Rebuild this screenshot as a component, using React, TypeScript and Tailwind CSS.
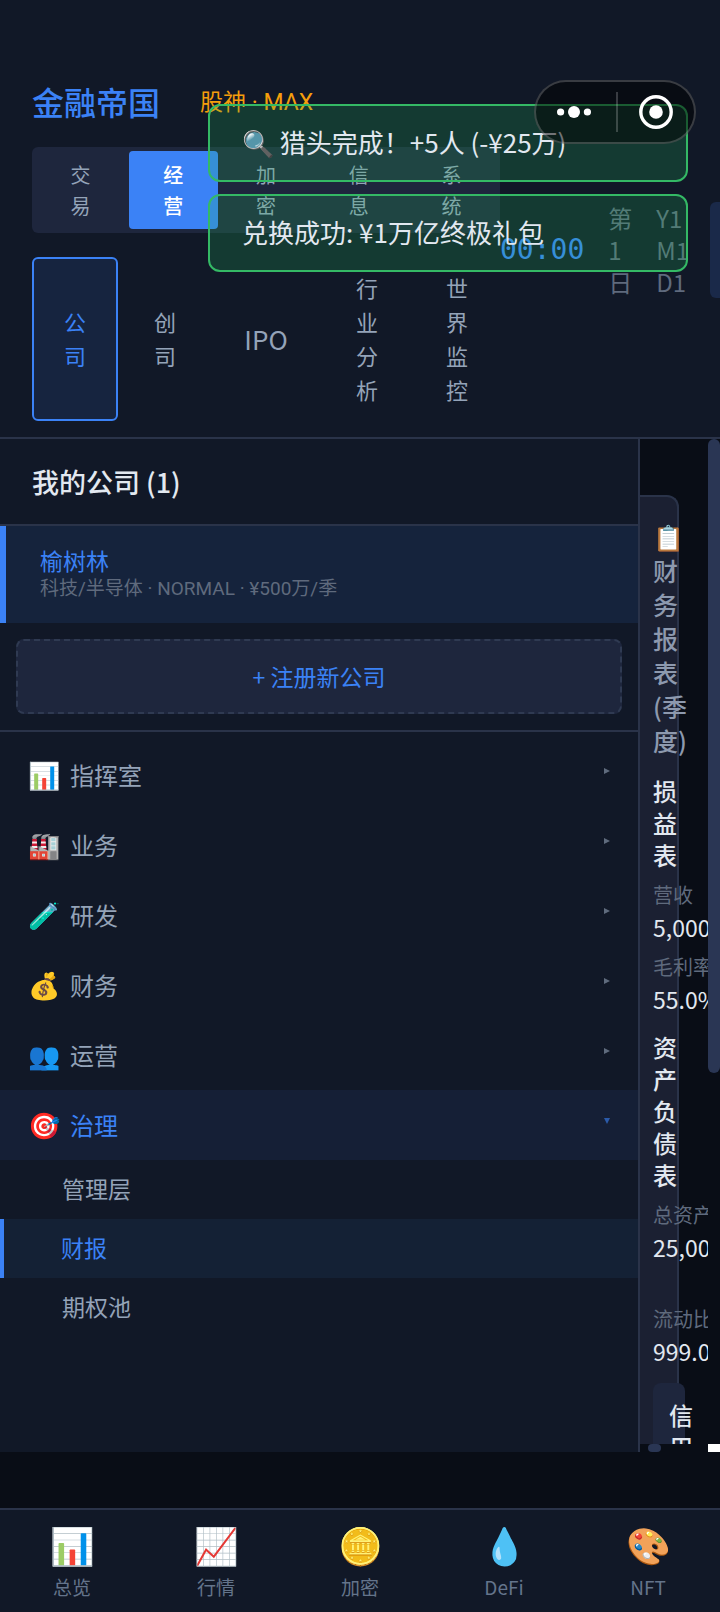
const modes = ["交易", "经营", "加密", "信息", "系统"];

const tabs = ["公司", "创司", "IPO", "行业分析", "世界监控"];

const toasts = ["🔍 猎头完成！+5人 (-¥25万)", "兑换成功: ¥1万亿终极礼包"];

const menu = [
  { icon: "📊", label: "指挥室" },
  { icon: "🏭", label: "业务" },
  { icon: "🧪", label: "研发" },
  { icon: "💰", label: "财务" },
  { icon: "👥", label: "运营" },
  { icon: "🎯", label: "治理", open: true, children: ["管理层", "财报", "期权池"] }
];

const nav = [
  { icon: "📊", label: "总览" },
  { icon: "📈", label: "行情" },
  { icon: "🪙", label: "加密" },
  { icon: "💧", label: "DeFi" },
  { icon: "🎨", label: "NFT" }
];

function Stat({ label, value }: { label: string; value: string }) {
  return (
    <div className="whitespace-nowrap">
      <dt className="text-[20px] leading-8 text-[#5f6a7d]">{label}</dt>
      <dd className="text-[23px] leading-8 text-[#e2e8f0]">{value}</dd>
    </div>
  );
}

function Header() {
  return (
    <header className="flex shrink-0 items-center overflow-hidden border-b-2 border-[#2a3349] bg-[#111827] pt-[78px] pb-4 pl-8">
      <div className="w-[468px] shrink-0">
        <div className="flex h-[47px] items-center gap-10">
          <h1 className="text-[32px] font-medium leading-[47px] text-[#3b82f6]">金融帝国</h1>
          <span className="pt-1 font-[Roboto,'Noto_Sans_CJK_SC',sans-serif] text-[23px] text-[#f59e0b]">
            股神 · MAX
          </span>
        </div>
        <div className="mt-[22px] flex gap-1 rounded-md bg-[#1e263d] p-1">
          {modes.map((mode) => (
            <button
              key={mode}
              type="button"
              className={
                mode === "经营"
                  ? "flex-1 rounded bg-[#3b82f6] px-[34px] py-2 text-[20px] font-medium leading-[31px] text-white"
                  : "flex-1 rounded px-[34px] py-2 text-[20px] leading-[31px] text-[#94a3b8]"
              }
            >
              {mode}
            </button>
          ))}
        </div>
        <nav className="mt-6 flex gap-1">
          {tabs.map((tab) => (
            <button
              key={tab}
              type="button"
              className={
                tab === "公司"
                  ? "w-[86px] rounded-md border-2 border-[#3b82f6] bg-[#16243f] px-[30px] pt-[11px] pb-[13px] text-[22px] leading-[34px] text-[#3b82f6]"
                  : tab === "IPO"
                    ? "w-[108px] py-3 text-[26px] leading-[34px] text-[#94a3b8]"
                    : "w-[86px] border-2 border-transparent px-[30px] pt-[11px] pb-[13px] text-[22px] leading-[34px] text-[#94a3b8]"
              }
            >
              {tab}
            </button>
          ))}
        </nav>
      </div>
      <div className="flex shrink-0 items-center gap-6 text-[24px] leading-8 text-[#5f6a7d]">
        <time className="font-['DejaVu_Sans_Mono',monospace] text-[28px] text-[#3b82f6]">00:00</time>
        <span className="w-6">第1日</span>
        <span className="w-[30px]">Y1 M1 D1</span>
        <button type="button" aria-label="加速" className="h-24 w-20 rounded-md bg-[#1a2949]" />
      </div>
    </header>
  );
}

function Sidebar() {
  return (
    <aside className="min-w-0 flex-1 overflow-hidden border-r-2 border-[#2a3349] bg-[#111827]">
      <h2 className="border-b-2 border-[#2a3349] px-8 py-[22px] text-[27px] font-medium leading-[41px] text-[#e2e8f0]">
        我的公司 (1)
      </h2>
      <button
        type="button"
        className="block h-[97px] w-full border-l-[6px] border-[#3b82f6] bg-[#15233c] pl-[34px] text-left"
      >
        <span className="block text-[23px] leading-[28px] text-[#3b82f6]">榆树林</span>
        <span className="block font-[Roboto,'Noto_Sans_CJK_SC',sans-serif] text-[19px] leading-[30px] text-[#5f6a7d]">
          科技/半导体 · NORMAL · ¥500万/季
        </span>
      </button>
      <div className="border-b-2 border-[#2a3349] p-4">
        <button
          type="button"
          className="h-[75px] w-full rounded-lg border-2 border-dashed border-[#2f3a52] bg-[#1e263d] text-[23px] text-[#3b82f6]"
        >
          + 注册新公司
        </button>
      </div>
      <ul className="pt-2">
        {menu.map((item) => (
          <li key={item.label}>
            <button
              type="button"
              className={
                item.open
                  ? "flex h-[70px] w-full items-center bg-[#151f36] pr-7 pl-7 text-[24px] text-[#3b82f6]"
                  : "flex h-[70px] w-full items-center pr-7 pl-7 text-[24px] text-[#94a3b8]"
              }
            >
              <span className="w-[42px] pb-1 text-left text-[26px]">{item.icon}</span>
              <span className="flex-1 text-left">{item.label}</span>
              <svg className={item.open ? "mb-2 size-[6px] rotate-90" : "mb-2 size-[6px]"} viewBox="0 0 6 6" aria-hidden>
                <path d="M0 0 L6 3 L0 6Z" fill="currentColor" opacity="0.6" />
              </svg>
            </button>
            {item.children?.map((child) => (
              <button
                key={child}
                type="button"
                className={
                  child === "财报"
                    ? "block h-[59px] w-full border-l-4 border-[#3b82f6] bg-[#142135] pb-[2px] pl-[57px] text-left text-[23px] text-[#3b82f6]"
                    : "block h-[59px] w-full pb-[2px] pl-[62px] text-left text-[23px] text-[#94a3b8]"
                }
              >
                {child}
              </button>
            ))}
          </li>
        ))}
      </ul>
    </aside>
  );
}

function Report() {
  return (
    <section className="grid w-20 shrink-0 grid-cols-[1fr_12px] grid-rows-[1fr_8px] overflow-hidden">
      <div className="min-h-0 overflow-hidden pt-14">
        <div className="h-full w-[39px] rounded-tr-xl border-t-2 border-r-2 border-[#2a3349] bg-[#1b2032] pt-[22px] pl-[13px]">
          <h3 className="w-[26px] text-[25px] font-medium leading-[34px] text-[#8d99ae]">📋 财务报表(季度)</h3>
          <h4 className="mt-[18px] w-6 text-[24px] font-medium leading-8 text-[#e2e8f0]">损益表</h4>
          <dl className="mt-2 space-y-2">
            <Stat label="营收" value="5,000" />
            <Stat label="毛利率" value="55.0%" />
          </dl>
          <h4 className="mt-4 w-6 text-[24px] font-medium leading-8 text-[#e2e8f0]">资产负债表</h4>
          <dl className="mt-2 space-y-10">
            <Stat label="总资产" value="25,000" />
            <Stat label="流动比率" value="999.0" />
          </dl>
          <div className="mt-4 w-8 rounded-lg bg-[#1e263d] p-4">
            <h4 className="w-6 text-[24px] font-medium leading-8 text-[#e2e8f0]">信用</h4>
          </div>
        </div>
      </div>
      <div className="h-[634px] rounded-full bg-[#2a3654]" />
      <div className="ml-2 w-[13px] rounded-full bg-[#2a3654]" />
      <div className="bg-white" />
    </section>
  );
}

function Capsule() {
  return (
    <div className="absolute top-20 right-6 flex h-16 w-[162px] items-center rounded-full border-2 border-white/20 bg-black/50">
      <button type="button" aria-label="更多" className="flex flex-1 justify-center pr-1">
        <svg width="34" height="12" viewBox="0 0 34 12" fill="#fff">
          <circle cx="3.6" cy="6" r="3.6" />
          <circle cx="17" cy="6" r="6" />
          <circle cx="30.4" cy="6" r="3.6" />
        </svg>
      </button>
      <span className="h-10 w-[2px] bg-white/20" />
      <button type="button" aria-label="关闭" className="flex flex-1 justify-center">
        <svg width="34" height="34" viewBox="0 0 34 34">
          <circle cx="17" cy="17" r="15.2" fill="none" stroke="#fff" strokeWidth="3.4" />
          <circle cx="17" cy="17" r="6.8" fill="#fff" />
        </svg>
      </button>
    </div>
  );
}

export default function App() {
  return (
    <main className="relative flex h-screen flex-col overflow-hidden bg-[#090d16] font-['Noto_Sans_CJK_SC',sans-serif]">
      <Header />
      <div className="flex min-h-0 flex-1">
        <Sidebar />
        <Report />
      </div>
      <nav className="mt-14 grid shrink-0 grid-cols-5 border-t-2 border-[#2a3349] bg-[#111827] pt-3 pb-[10px]">
        {nav.map((item) => (
          <a key={item.label} href="#" className="flex flex-col items-center text-[#64748b]">
            <span className="text-[36px] leading-[42px]">{item.icon}</span>
            <span className="mt-2 text-[19px] leading-[30px]">{item.label}</span>
          </a>
        ))}
      </nav>
      <div className="absolute top-[104px] right-8 flex w-[480px] flex-col gap-3">
        {toasts.map((toast) => (
          <p
            key={toast}
            className="rounded-xl border-2 border-[#34b965] bg-[#22c55e]/20 px-8 pt-[17px] pb-[19px] text-[26px] leading-[38px] text-[#e2e8f0]"
          >
            {toast}
          </p>
        ))}
      </div>
      <Capsule />
    </main>
  );
}
